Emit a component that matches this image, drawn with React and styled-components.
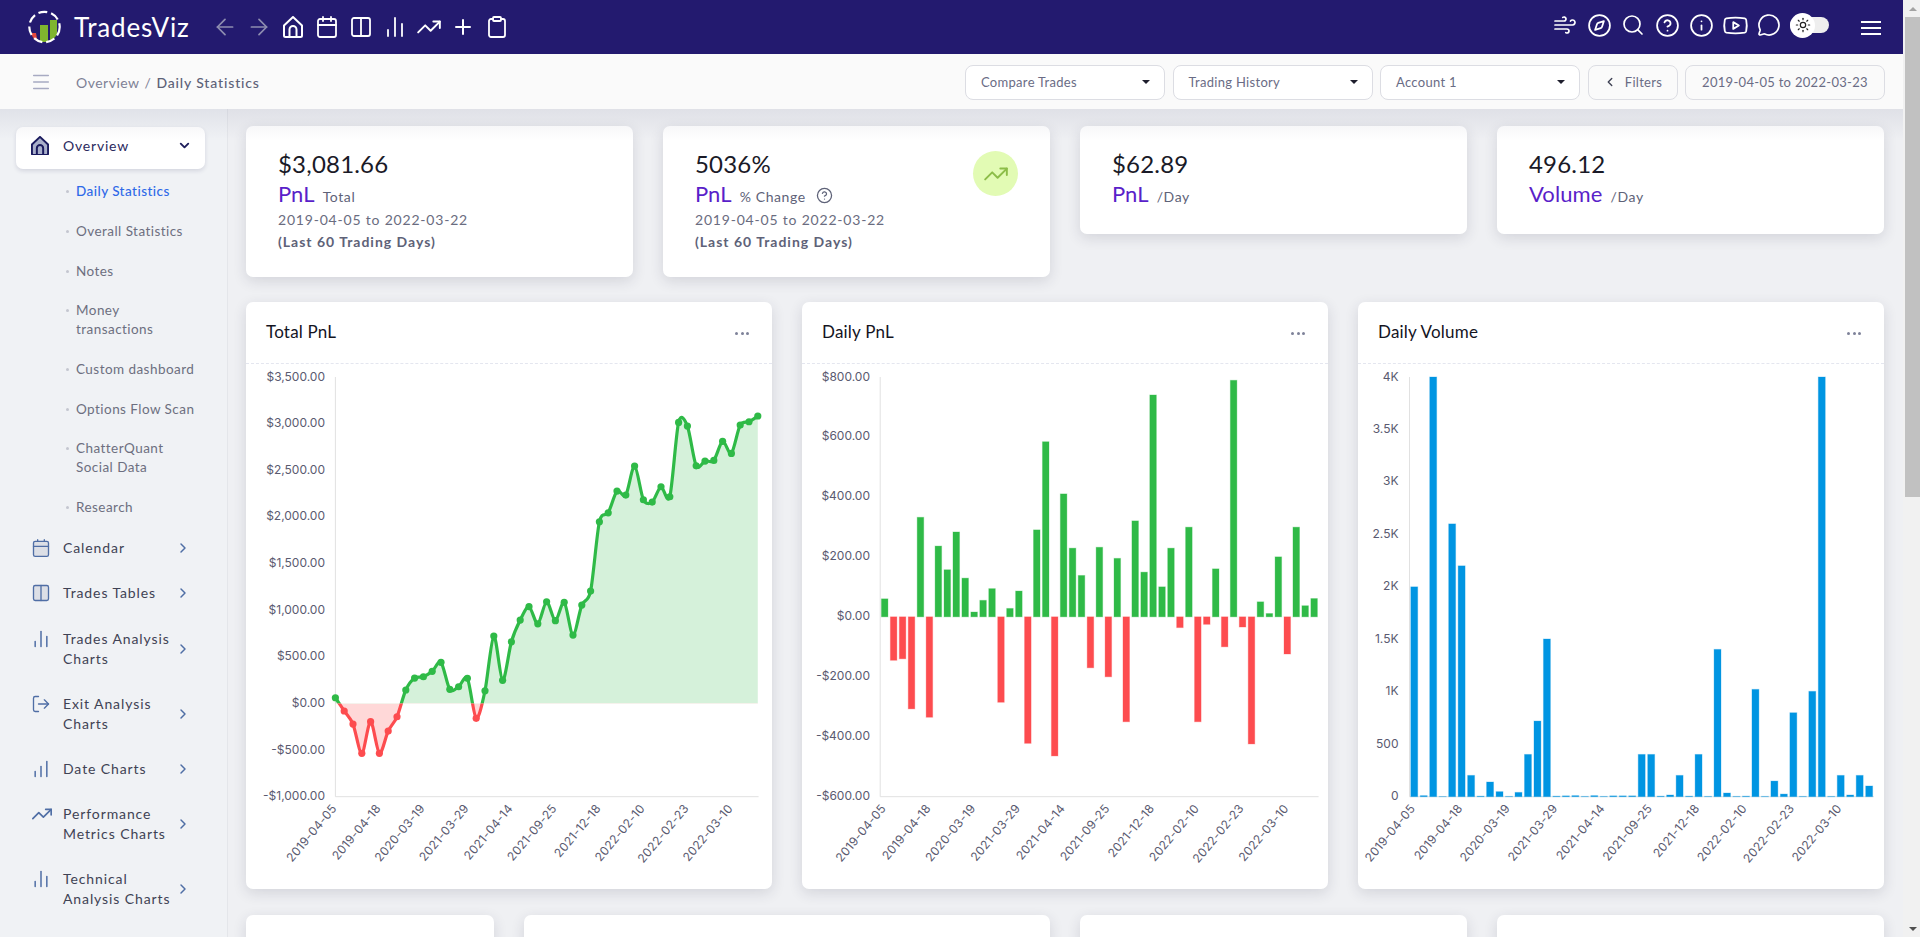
import React from "react";
import styled, { createGlobalStyle } from "styled-components";
import {
  ArrowLeft,
  ArrowRight,
  Calendar,
  ChartNoAxesColumn,
  ChartNoAxesColumnIncreasing,
  ChevronDown,
  ChevronLeft,
  ChevronRight,
  CircleHelp,
  Clipboard,
  Columns2,
  Compass,
  Info,
  LogOut,
  Menu,
  MessageCircle,
  Plus,
  Search,
  Sun,
  TrendingUp,
  Wind,
  Youtube,
} from "lucide-react";

const FONT = `Lato, "Open Sans", sans-serif`;

const GlobalStyle = createGlobalStyle`
  html, body {
    margin: 0;
    padding: 0;
    height: 100%;
    overflow: hidden;
    font-family: ${FONT};
    background: #eff0f3;
  }
  * { box-sizing: border-box; }
`;

/* data read off the charts */
const totalPnl = [
  61, -81, -221, -535, -196, -535, -296, -143, 144, 272, 286, 344, 441, 151, 179, 269, -160, 136,
  722, 248, 661, 894, 1037, 854, 1090, 887, 1084, 733, 1055, 1205, 1948, 2044, 2277, 2234, 2545,
  2184, 2159, 2323, 2216, 3013, 2974, 2548, 2599, 2606, 2810, 2681, 2985, 3020, 3081.66,
];
const dailyPnl = [
  60, -145, -140, -307, 332, -335, 236, 157, 283, 129, 16, 55, 94, -285, 28, 86, -422, 290, 584,
  -464, 410, 229, 138, -170, 232, -200, 195, -350, 320, 149, 740, 100, 229, -36, 299, -350, -25,
  160, -100, 789, -34, -424, 50, 11, 200, -124, 299, 37, 61,
];
const dailyVolume = [
  2000, 10, 4000, 2, 2600, 2200, 203, 5, 140, 48, 3, 41, 403, 721, 1503, 5, 8, 10, 3, 10, 3, 8, 8,
  8, 403, 403, 5, 16, 203, 5, 403, 3, 1404, 35, 3, 5, 1023, 3, 149, 25, 800, 3, 1004, 4000, 3, 203,
  16, 203, 102,
];
const dates = [
  "2019-04-05", "2019-04-18", "2020-03-19", "2021-03-29", "2021-04-14",
  "2021-09-25", "2021-12-18", "2022-02-10", "2022-02-23", "2022-03-10",
];

const GREEN = "#2fba47";
const RED = "#fd4c4f";
const BLUE = "#0095e2";
const TOP = 13;
const BOTTOM = 432.7;

const HouseIcon = ({ size = 22, stroke = "#fff", fill = "none", width = 2 }) => (
  <svg width={size} height={size * 1.1} viewBox="0 0 20 22" fill="none">
    <path
      d="M1 9.5 10 1l9 8.5v10a1.5 1.5 0 0 1-1.5 1.5h-15A1.5 1.5 0 0 1 1 19.5z"
      fill={fill}
      stroke={stroke}
      strokeWidth={width}
      strokeLinejoin="round"
    />
    <path d="M6.5 21v-7.5a3.5 3.5 0 0 1 7 0V21" stroke={stroke} strokeWidth={width} />
  </svg>
);

const Logo = () => (
  <svg width="33" height="34" viewBox="0 0 33 34" fill="none">
    <path d="M3 23h5l1.5 8.5C6.5 30 4 27 3 23z" fill="#e5483c" />
    <rect x="12" y="15" width="8" height="17" fill="#7fb52f" />
    <path d="M22 10h7v14c-1 2.5-3.5 5.5-7 6.5z" fill="#7fb52f" />
    <circle cx="16.5" cy="17" r="15.2" stroke="#fff" strokeWidth="2.2" strokeDasharray="9 4" />
  </svg>
);

const smoothPath = (pts) => {
  let d = `M${pts[0][0]} ${pts[0][1]}`;
  for (let i = 0; i < pts.length - 1; i++) {
    const p0 = pts[i - 1] || pts[i];
    const p1 = pts[i];
    const p2 = pts[i + 1];
    const p3 = pts[i + 2] || p2;
    const c1x = p1[0] + (p2[0] - p0[0]) / 7;
    const c1y = p1[1] + (p2[1] - p0[1]) / 7;
    const c2x = p2[0] - (p3[0] - p1[0]) / 7;
    const c2y = p2[1] - (p3[1] - p1[1]) / 7;
    d += `C${c1x} ${c1y} ${c2x} ${c2y} ${p2[0]} ${p2[1]}`;
  }
  return d;
};

const Axes = ({ x0, x1, ticks, labelEnd, labelStep, labelOffset }) => (
  <>
    <line x1={x0} x2={x0} y1={TOP} y2={BOTTOM} stroke="#e1e1e1" />
    <line x1={x0} x2={x1} y1={BOTTOM} y2={BOTTOM} stroke="#e1e1e1" />
    {ticks.map((t, i) => (
      <AxisLabel
        key={t}
        x={labelEnd}
        y={TOP + ((BOTTOM - TOP) * i) / (ticks.length - 1) + 3.5}
        textAnchor="end"
      >
        {t}
      </AxisLabel>
    ))}
    {dates.map((d, i) => {
      const x = x0 + labelOffset + i * labelStep;
      const y = BOTTOM + 12;
      return (
        <DateLabel key={d} x={x} y={y} textAnchor="end" transform={`rotate(-50 ${x} ${y})`}>
          {d}
        </DateLabel>
      );
    })}
  </>
);

const LineChart = () => {
  const x0 = 89.4;
  const x1 = 512.6;
  const step = 8.8;
  const zero = TOP + (BOTTOM - TOP) * (3500 / 4500);
  const y = (v) => zero - (v * (BOTTOM - TOP)) / 4500;
  const pts = totalPnl.map((v, i) => [x0 + i * step, y(v)]);
  const line = smoothPath(pts);
  const last = pts[pts.length - 1][0];
  const area = `${line}L${last} ${zero}L${x0} ${zero}Z`;
  return (
    <ChartSvg viewBox="0 0 526 525">
      <defs>
        <clipPath id="above">
          <rect x="0" y="0" width="526" height={zero} />
        </clipPath>
        <clipPath id="below">
          <rect x="0" y={zero} width="526" height={525 - zero} />
        </clipPath>
      </defs>
      <Axes
        x0={x0}
        x1={x1}
        labelEnd={79}
        labelStep={step * 5}
        labelOffset={2}
        ticks={[
          "$3,500.00", "$3,000.00", "$2,500.00", "$2,000.00", "$1,500.00",
          "$1,000.00", "$500.00", "$0.00", "-$500.00", "-$1,000.00",
        ]}
      />
      <path d={area} fill={GREEN} fillOpacity="0.2" clipPath="url(#above)" />
      <path d={area} fill={RED} fillOpacity="0.22" clipPath="url(#below)" />
      <path d={line} fill="none" stroke={GREEN} strokeWidth="3.2" clipPath="url(#above)" />
      <path d={line} fill="none" stroke={RED} strokeWidth="3.2" clipPath="url(#below)" />
      {pts.map((p, i) => (
        <circle key={i} cx={p[0]} cy={p[1]} r="3.6" fill={totalPnl[i] < 0 ? RED : GREEN} />
      ))}
    </ChartSvg>
  );
};

const BarChart = ({ values, x0, x1, top, bottom, ticks, labelEnd, colorOf }) => {
  const slot = (x1 - x0) / values.length;
  const w = slot * 0.73;
  const zero = TOP + ((BOTTOM - TOP) * top) / (top - bottom);
  const scale = (BOTTOM - TOP) / (top - bottom);
  return (
    <ChartSvg viewBox="0 0 526 525">
      <Axes
        x0={x0}
        x1={x1}
        labelEnd={labelEnd}
        labelStep={slot * 5}
        labelOffset={6.4}
        ticks={ticks}
      />
      {values.map((v, i) => {
        const h = Math.abs(v) * scale;
        const color = colorOf(v);
        return (
          <rect
            key={i}
            x={x0 + i * slot + (slot - w) / 2}
            y={v >= 0 ? zero - h : zero}
            width={w}
            height={h}
            fill={color}
            stroke={color}
            strokeOpacity="0.3"
          />
        );
      })}
    </ChartSvg>
  );
};

const mainMenu = [
  { label: "Calendar", icon: <Calendar size={20} strokeWidth={1.6} fill="#dcdfe6" /> },
  { label: "Trades Tables", icon: <Columns2 size={20} strokeWidth={1.6} fill="#dcdfe6" /> },
  { label: "Trades Analysis Charts", icon: <ChartNoAxesColumn size={20} strokeWidth={1.8} /> },
  { label: "Exit Analysis Charts", icon: <LogOut size={20} strokeWidth={1.6} /> },
  { label: "Date Charts", icon: <ChartNoAxesColumnIncreasing size={20} strokeWidth={1.8} /> },
  { label: "Performance Metrics Charts", icon: <TrendingUp size={22} strokeWidth={1.8} /> },
  { label: "Technical Analysis Charts", icon: <ChartNoAxesColumn size={20} strokeWidth={1.8} /> },
];

const subMenu = [
  "Daily Statistics",
  "Overall Statistics",
  "Notes",
  "Money transactions",
  "Custom dashboard",
  "Options Flow Scan",
  "ChatterQuant Social Data",
  "Research",
];

const App = () => {
  return (
    <Root>
      <GlobalStyle />
      <Page>
        <Navbar>
          <Brand>
            <Logo />
            <BrandName>TradesViz</BrandName>
          </Brand>
          <NavIcon $muted><ArrowLeft size={26} strokeWidth={1.6} /></NavIcon>
          <NavIcon $muted><ArrowRight size={26} strokeWidth={1.6} /></NavIcon>
          <NavIcon><HouseIcon size={20} /></NavIcon>
          <NavIcon><Calendar size={24} strokeWidth={1.8} /></NavIcon>
          <NavIcon><Columns2 size={24} strokeWidth={1.8} /></NavIcon>
          <NavIcon><ChartNoAxesColumn size={24} strokeWidth={1.8} /></NavIcon>
          <NavIcon><TrendingUp size={26} strokeWidth={1.8} /></NavIcon>
          <NavIcon><Plus size={24} strokeWidth={2} /></NavIcon>
          <NavIcon><Clipboard size={24} strokeWidth={1.8} /></NavIcon>
          <NavRight>
            <NavIcon><Wind size={24} strokeWidth={1.7} /></NavIcon>
            <NavIcon><Compass size={25} strokeWidth={1.7} /></NavIcon>
            <NavIcon><Search size={24} strokeWidth={1.7} /></NavIcon>
            <NavIcon><CircleHelp size={25} strokeWidth={1.7} /></NavIcon>
            <NavIcon><Info size={25} strokeWidth={1.7} /></NavIcon>
            <NavIcon><Youtube size={27} strokeWidth={1.6} /></NavIcon>
            <NavIcon><MessageCircle size={24} strokeWidth={1.7} /></NavIcon>
            <Toggle>
              <ToggleKnob><Sun size={16} color="#222" strokeWidth={1.8} /></ToggleKnob>
            </Toggle>
          </NavRight>
          <NavBurger>
            <span /><span /><span />
          </NavBurger>
        </Navbar>

        <SubBar>
          <Menu size={22} color="#a7aac2" strokeWidth={1.6} />
          <Crumbs>
            Overview<CrumbSep>/</CrumbSep><CrumbNow>Daily Statistics</CrumbNow>
          </Crumbs>
          <SubActions>
            <SelectBox>Compare Trades<Caret /></SelectBox>
            <SelectBox>Trading History<Caret /></SelectBox>
            <SelectBox>Account 1<Caret /></SelectBox>
            <FilterButton><ChevronLeft size={14} color="#3f4254" strokeWidth={2.4} />Filters</FilterButton>
            <DateButton>2019-04-05 to 2022-03-23</DateButton>
          </SubActions>
        </SubBar>

        <Body>
          <TopFade />
          <Sidebar>
            <ActiveItem>
              <MenuIcon><HouseIcon size={18} stroke="#1a1a5e" fill="#a9afca" width={2.2} /></MenuIcon>
              <ActiveLabel>Overview</ActiveLabel>
              <ChevronDown size={15} color="#1e1e5c" strokeWidth={3} />
            </ActiveItem>
            <SubList>
              {subMenu.map((s, i) => (
                <SubItem key={s} $current={i === 0}>
                  <SubDot />
                  <span>{s}</span>
                </SubItem>
              ))}
            </SubList>
            {mainMenu.map((m) => (
              <MenuItem key={m.label}>
                <MenuIcon $tint>{m.icon}</MenuIcon>
                <MenuLabel>{m.label}</MenuLabel>
                <MenuChevron><ChevronRight size={16} strokeWidth={2.2} /></MenuChevron>
              </MenuItem>
            ))}
          </Sidebar>

          <Content>
            <StatRow>
              <StatCard>
                <div>
                  <StatValue>$3,081.66</StatValue>
                  <StatTitle>PnL <StatNote>Total</StatNote></StatTitle>
                  <StatDates>2019-04-05 to 2022-03-22</StatDates>
                  <StatLast>(Last 60 Trading Days)</StatLast>
                </div>
              </StatCard>
              <StatCard>
                <div>
                  <StatValue>5036%</StatValue>
                  <StatTitle>
                    PnL <StatNote>% Change</StatNote>
                    <CircleHelp size={17} color="#5e6278" strokeWidth={1.8} />
                  </StatTitle>
                  <StatDates>2019-04-05 to 2022-03-22</StatDates>
                  <StatLast>(Last 60 Trading Days)</StatLast>
                </div>
                <TrendBadge><TrendingUp size={26} color="#8cbd48" strokeWidth={1.8} /></TrendBadge>
              </StatCard>
              <StatCard>
                <div>
                  <StatValue>$62.89</StatValue>
                  <StatTitle>PnL <StatNote>/Day</StatNote></StatTitle>
                </div>
              </StatCard>
              <StatCard>
                <div>
                  <StatValue>496.12</StatValue>
                  <StatTitle>Volume <StatNote>/Day</StatNote></StatTitle>
                </div>
              </StatCard>
            </StatRow>

            <ChartRow>
              <ChartCard>
                <ChartHead><ChartTitle>Total PnL</ChartTitle><Dots><i /><i /><i /></Dots></ChartHead>
                <LineChart />
              </ChartCard>
              <ChartCard>
                <ChartHead><ChartTitle>Daily PnL</ChartTitle><Dots><i /><i /><i /></Dots></ChartHead>
                <BarChart
                  values={dailyPnl}
                  x0={78.2}
                  x1={516.6}
                  top={800}
                  bottom={-600}
                  labelEnd={68}
                  colorOf={(v) => (v < 0 ? RED : GREEN)}
                  ticks={[
                    "$800.00", "$600.00", "$400.00", "$200.00", "$0.00",
                    "-$200.00", "-$400.00", "-$600.00",
                  ]}
                />
              </ChartCard>
              <ChartCard>
                <ChartHead><ChartTitle>Daily Volume</ChartTitle><Dots><i /><i /><i /></Dots></ChartHead>
                <BarChart
                  values={dailyVolume}
                  x0={51.5}
                  x1={515.9}
                  top={4000}
                  bottom={0}
                  labelEnd={40.5}
                  colorOf={() => BLUE}
                  ticks={["4K", "3.5K", "3K", "2.5K", "2K", "1.5K", "1K", "500", "0"]}
                />
              </ChartCard>
            </ChartRow>

            <BottomRow>
              <BottomCard />
              <BottomCard />
              <BottomCard />
              <BottomCard />
            </BottomRow>
          </Content>
        </Body>
      </Page>

      <ScrollTrack>
        <ScrollArrow />
        <ScrollThumb />
        <ScrollArrow $down />
      </ScrollTrack>
    </Root>
  );
};

export default App;

const Root = styled.div`
  display: flex;
  width: 100%;
  height: 100vh;
  overflow: hidden;
`;

const Page = styled.div`
  flex: 1;
  min-width: 0;
  display: flex;
  flex-direction: column;
`;

const Navbar = styled.header`
  flex: none;
  height: 54px;
  display: flex;
  align-items: center;
  padding-left: 28px;
  padding-right: 22px;
  background: #231a6f;
  color: #fff;
`;

const Brand = styled.div`
  display: flex;
  align-items: center;
  gap: 13px;
  width: 180px;
`;

const BrandName = styled.span`
  font-size: 26px;
  font-weight: 400;
  letter-spacing: 0.8px;
  color: #fff;
`;

const NavIcon = styled.span`
  width: 34px;
  flex: none;
  display: flex;
  align-items: center;
  justify-content: center;
  color: ${(p) => (p.$muted ? "#8e8db0" : "#fff")};
`;

const NavRight = styled.div`
  margin-left: auto;
  display: flex;
  align-items: center;
  padding-bottom: 4px;
`;

const Toggle = styled.span`
  width: 39px;
  height: 16px;
  margin-left: 4px;
  border-radius: 8px;
  background: #eeeeee;
  display: flex;
  align-items: center;
`;

const ToggleKnob = styled.span`
  width: 25px;
  height: 25px;
  flex: none;
  border-radius: 50%;
  background: #fff;
  display: flex;
  align-items: center;
  justify-content: center;
`;

const NavBurger = styled.div`
  width: 20px;
  margin-left: 32px;
  display: flex;
  flex-direction: column;
  gap: 4px;
  margin-top: 2px;

  span {
    display: block;
    height: 2px;
    background: #fff;
  }
`;

const SubBar = styled.div`
  flex: none;
  height: 55px;
  display: flex;
  align-items: center;
  padding: 1px 18px 0 30px;
  background: #fafafa;
`;

const Crumbs = styled.div`
  margin-left: 24px;
  font-size: 14px;
  letter-spacing: 0.5px;
  color: #7e8196;
`;

const CrumbSep = styled.span`
  margin: 0 5px;
`;

const CrumbNow = styled.span`
  color: #5e6278;
  font-weight: 500;
  letter-spacing: 0.85px;
`;

const SubActions = styled.div`
  margin-left: auto;
  display: flex;
  align-items: center;
  gap: 7.5px;
`;

const SelectBox = styled.div`
  width: 200px;
  height: 35px;
  display: flex;
  align-items: center;
  justify-content: space-between;
  padding: 0 14px 0 15px;
  border: 1px solid #dcdde3;
  border-radius: 8px;
  background: #fff;
  font-size: 13px;
  letter-spacing: 0.3px;
  color: #6a6c85;
`;

const Caret = styled.span`
  width: 0;
  height: 0;
  border-left: 4px solid transparent;
  border-right: 4px solid transparent;
  border-top: 4px solid #1e1e2d;
`;

const FilterButton = styled.div`
  width: 90px;
  height: 35px;
  display: flex;
  align-items: center;
  justify-content: center;
  gap: 8px;
  border: 1px solid #dcdde3;
  border-radius: 8px;
  background: #fafafa;
  font-size: 13px;
  letter-spacing: 0.3px;
  color: #6a6c85;
`;

const DateButton = styled.div`
  width: 200px;
  height: 35px;
  display: flex;
  align-items: center;
  justify-content: center;
  border: 1px solid #dcdde3;
  border-radius: 8px;
  background: #fafafa;
  font-size: 13px;
  letter-spacing: 0.3px;
  color: #6a6c85;
`;

const Body = styled.div`
  position: relative;
  flex: 1;
  min-height: 0;
  display: flex;
`;

const TopFade = styled.div`
  position: absolute;
  left: 0;
  right: 0;
  top: 0;
  height: 32px;
  background: linear-gradient(rgba(40, 42, 90, 0.08), rgba(40, 42, 90, 0));
  pointer-events: none;
  z-index: 2;
`;

const Sidebar = styled.aside`
  flex: none;
  width: 228px;
  padding: 18px 22px 0 16px;
  background: #f0f2f5;
  border-right: 1px solid #e4e6ea;
  overflow: hidden;
`;

const ActiveItem = styled.div`
  height: 42px;
  width: 189px;
  display: flex;
  align-items: center;
  padding: 0 13px 5px 15px;
  border-radius: 7px;
  background: #fff;
  box-shadow: 0 2px 4px rgba(40, 42, 90, 0.14);
`;

const MenuIcon = styled.span`
  flex: none;
  width: 32px;
  height: 20px;
  display: flex;
  align-items: center;
  color: ${(p) => (p.$tint ? "#4f6ea5" : "inherit")};
`;

const ActiveLabel = styled.span`
  flex: 1;
  font-size: 14px;
  letter-spacing: 0.8px;
  color: #2b2a5e;
`;

const SubList = styled.div`
  padding-top: 2.2px;
  padding-left: 50px;
  margin-bottom: -1px;
`;

const SubItem = styled.div`
  display: flex;
  width: 130px;
  padding: 11px 0 9.7px;
  line-height: 19px;
  font-size: 13.5px;
  letter-spacing: 0.45px;
  color: ${(p) => (p.$current ? "#2e69e8" : "#6d6f80")};
  font-weight: ${(p) => (p.$current ? 500 : 400)};
`;

const SubDot = styled.span`
  flex: none;
  width: 3px;
  height: 3px;
  margin-top: 8px;
  margin-right: 7px;
  border-radius: 50%;
  background: #c4c6d0;
`;

const MenuItem = styled.div`
  display: flex;
  align-items: flex-start;
  width: 189px;
  padding: 12.6px 0 12.6px 15px;
`;

const MenuLabel = styled.span`
  width: 112px;
  line-height: 20px;
  font-size: 14px;
  letter-spacing: 0.9px;
  color: #3f4254;
`;

const MenuChevron = styled.span`
  align-self: center;
  display: flex;
  color: #4f6ea5;
`;

const Content = styled.main`
  flex: 1;
  min-width: 0;
  padding: 17px 19px 0 18px;
  overflow: hidden;
`;

const StatRow = styled.div`
  display: grid;
  grid-template-columns: repeat(4, 1fr);
  gap: 30px;
  align-items: start;
  margin-bottom: 25px;
`;

const StatCard = styled.div`
  display: flex;
  justify-content: space-between;
  align-items: flex-start;
  padding: 23px 32px 24px;
  border-radius: 7px;
  background: #fff;
  box-shadow: 0 4px 14px rgba(40, 42, 70, 0.14);
`;

const StatValue = styled.div`
  font-size: 24px;
  line-height: 30px;
  letter-spacing: 0.2px;
  color: #1a1a27;
`;

const StatTitle = styled.div`
  display: flex;
  align-items: baseline;
  height: 30px;
  margin-top: 1px;
  line-height: 28px;
  font-size: 22px;
  letter-spacing: 0.1px;
  color: #5a1fc9;

  svg {
    margin-left: 10px;
    align-self: center;
  }
`;

const StatNote = styled.span`
  margin-left: 8px;
  font-size: 14px;
  letter-spacing: 0.6px;
  color: #5e6278;
`;

const StatDates = styled.div`
  line-height: 20px;
  font-size: 14px;
  letter-spacing: 0.8px;
  color: #6a6c80;
`;

const StatLast = styled.div`
  margin-top: 1px;
  line-height: 22px;
  font-size: 14px;
  font-weight: 700;
  letter-spacing: 1px;
  color: #5e6278;
`;

const TrendBadge = styled.span`
  flex: none;
  width: 45px;
  height: 45px;
  margin-top: 2px;
  border-radius: 50%;
  background: #e2fbb4;
  display: flex;
  align-items: center;
  justify-content: center;
`;

const ChartRow = styled.div`
  display: grid;
  grid-template-columns: repeat(3, 1fr);
  gap: 30px;
  margin-bottom: 26px;
`;

const ChartCard = styled.section`
  height: 587px;
  border-radius: 7px;
  background: #fff;
  box-shadow: 0 4px 14px rgba(40, 42, 70, 0.14);
`;

const ChartHead = styled.div`
  height: 62px;
  display: flex;
  align-items: center;
  justify-content: space-between;
  padding: 0 23px 0 20px;
  border-bottom: 1px dashed #e4e6ef;
`;

const ChartTitle = styled.h3`
  margin: 0 0 2px;
  font-size: 17px;
  font-weight: 400;
  letter-spacing: 0.2px;
  color: #14141f;
`;

const Dots = styled.span`
  display: flex;
  gap: 2.5px;
  margin-top: 2px;

  i {
    width: 3px;
    height: 3px;
    border-radius: 50%;
    background: #7e8299;
  }
`;

const ChartSvg = styled.svg`
  display: block;
  width: 526px;
  height: 525px;
`;

const AxisLabel = styled.text`
  font-family: Inter, sans-serif;
  font-size: 12px;
  fill: #5a5a70;
`;

const DateLabel = styled.text`
  font-family: Inter, sans-serif;
  font-size: 12px;
  letter-spacing: 0.2px;
  fill: #5a5a70;
`;

const BottomRow = styled.div`
  display: grid;
  grid-template-columns: 248px 526px 1fr 1fr;
  gap: 30px;
`;

const BottomCard = styled.div`
  height: 260px;
  border-radius: 7px;
  background: #fff;
  box-shadow: 0 4px 14px rgba(40, 42, 70, 0.14);
`;

const ScrollTrack = styled.div`
  flex: none;
  width: 17px;
  height: 100%;
  padding-left: 2px;
  display: flex;
  flex-direction: column;
  background: #f1f1f1;
`;

const ScrollArrow = styled.span`
  flex: none;
  height: 17px;
  display: flex;
  align-items: center;
  justify-content: center;
  margin-top: ${(p) => (p.$down ? "auto" : "0")};

  &::before {
    content: "";
    width: 0;
    height: 0;
    border-left: 4px solid transparent;
    border-right: 4px solid transparent;
    ${(p) =>
      p.$down ? "border-top: 4px solid #505050;" : "border-bottom: 4px solid #a3a3a3;"}
  }
`;

const ScrollThumb = styled.span`
  flex: none;
  height: 480px;
  background: #c1c1c1;
`;
